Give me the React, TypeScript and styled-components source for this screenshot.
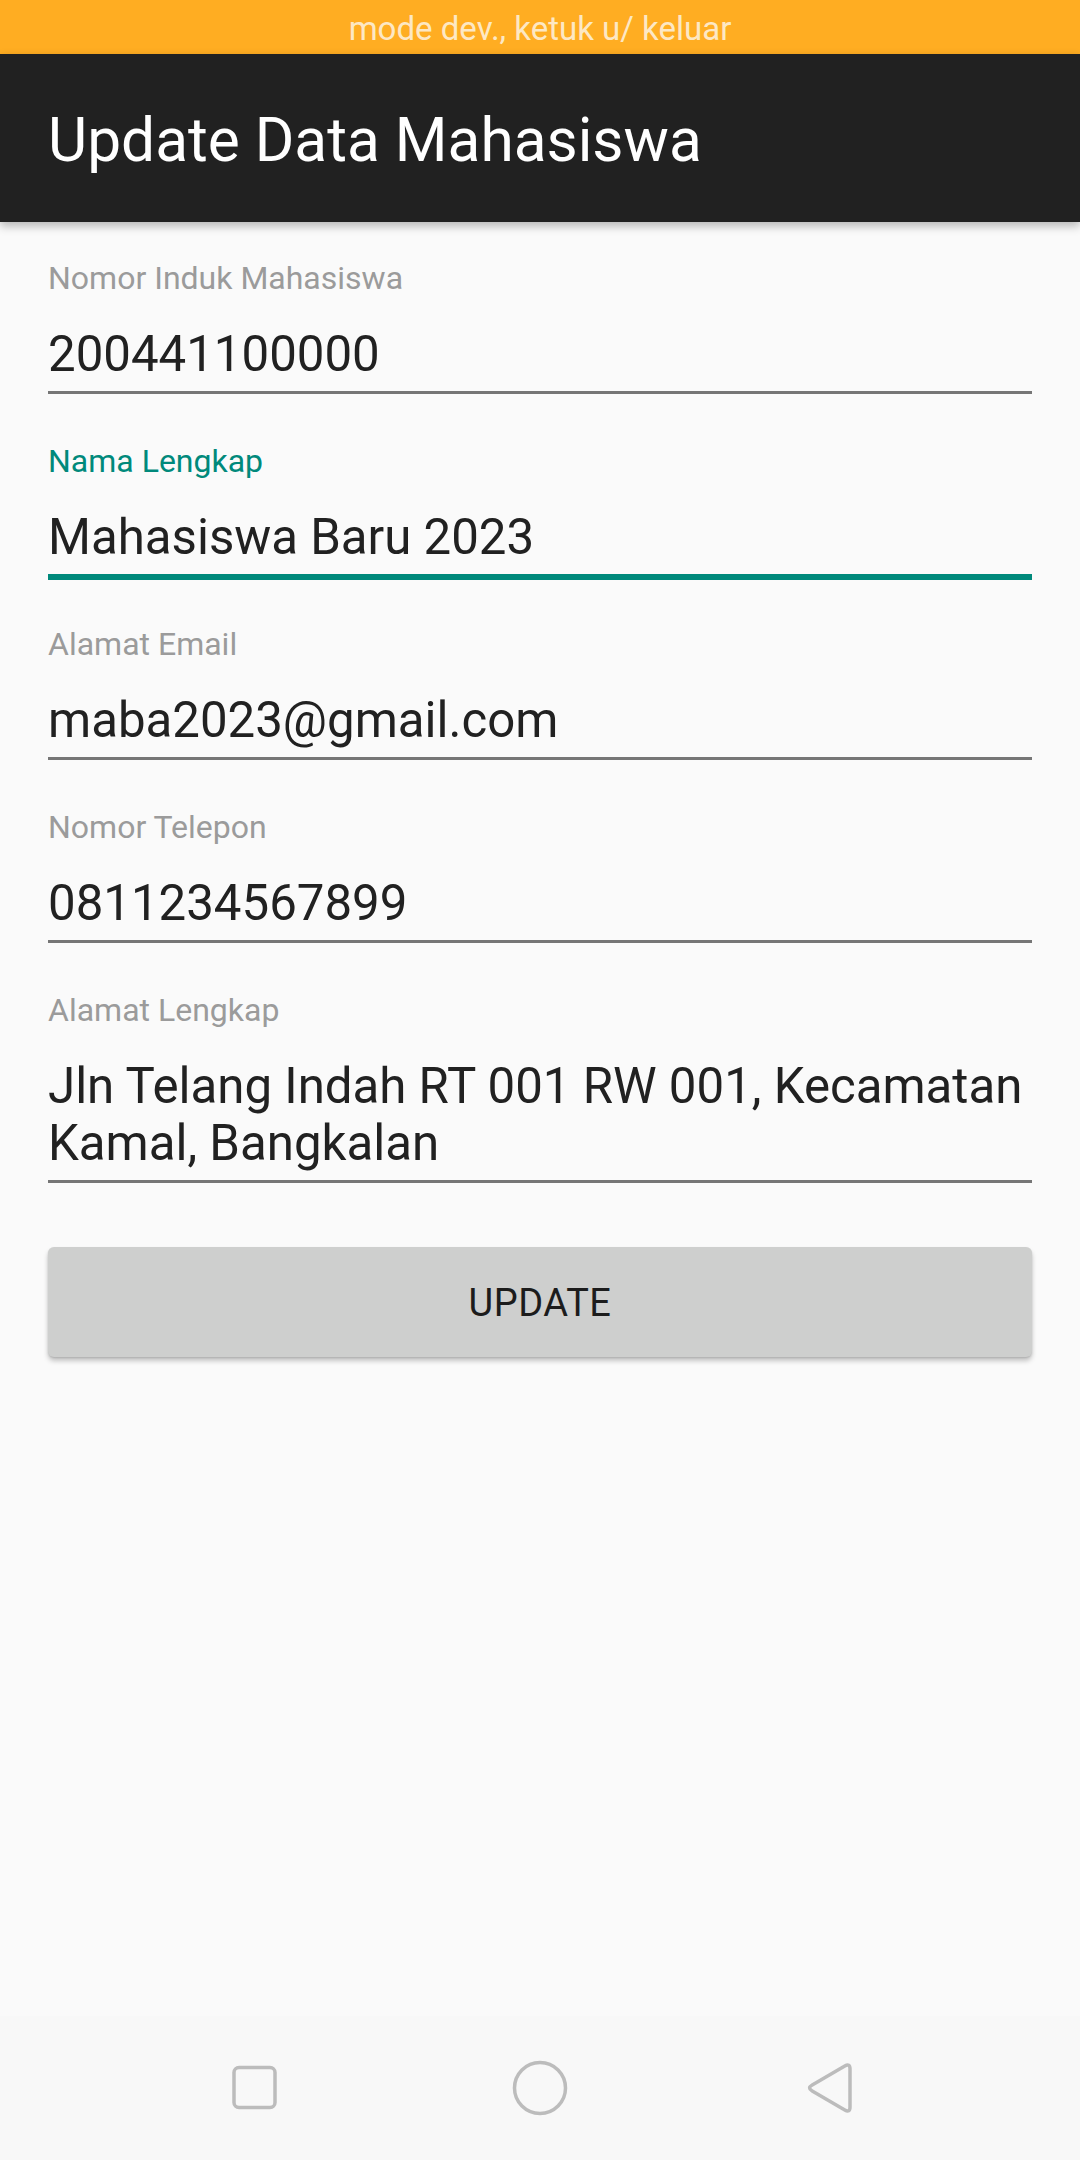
import React from "react";
import styled, { createGlobalStyle } from "styled-components";

const GlobalStyle = createGlobalStyle`
  html, body {
    margin: 0;
    padding: 0;
    background: #fafafa;
    font-family: Roboto, "Noto Sans", "Liberation Sans", sans-serif;
  }
  * { box-sizing: border-box; }
`;

const Screen = styled.div`
  min-height: 100vh;
  display: flex;
  flex-direction: column;
  background: #fafafa;
`;

const StatusBar = styled.div`
  height: 54px;
  background: #ffad22;
  color: #fde8c4;
  font-size: 33px;
  line-height: 58px;
  text-align: center;
  white-space: nowrap;
`;

const Toolbar = styled.header`
  height: 168px;
  background: #212121;
  display: flex;
  align-items: center;
  padding: 6px 48px 0;
  box-shadow: 0 4px 9px rgba(0, 0, 0, 0.28);
  position: relative;
  z-index: 1;
`;

const Title = styled.h1`
  margin: 0;
  font-size: 60.4px;
  font-weight: 400;
  color: #ffffff;
  line-height: 70px;
`;

const Form = styled.main`
  flex: 1;
  display: flex;
  flex-direction: column;
  gap: 49px;
  padding: 38px 48px 0;
`;

const Field = styled.div`
  display: flex;
  flex-direction: column;
`;

const Label = styled.label<{ $focused?: boolean }>`
  font-size: 32px;
  line-height: 36px;
  color: ${(p) => (p.$focused ? "#00897b" : "#9b9b9b")};
`;

const Value = styled.div`
  margin-top: 30px;
  padding-bottom: 8px;
  font-size: 49.2px;
  line-height: 57px;
  color: #212121;
  white-space: pre-wrap;
`;

const Underline = styled.div<{ $focused?: boolean }>`
  height: ${(p) => (p.$focused ? "6px" : "3px")};
  margin-bottom: ${(p) => (p.$focused ? "-3px" : "0")};
  background: ${(p) => (p.$focused ? "#00897b" : "#767676")};
`;

const Button = styled.button`
  margin-top: 15px;
  height: 110px;
  border: none;
  border-radius: 6px;
  background: #cecfce;
  color: #1c1c1c;
  font-family: Roboto, "Noto Sans", "Liberation Sans", sans-serif;
  font-size: 38px;
  font-weight: 400;
  letter-spacing: 0.5px;
  box-shadow: 0 4px 5px rgba(0, 0, 0, 0.22), 0 1px 2px rgba(0, 0, 0, 0.12);
  padding: 2px 0 0;
`;

const NavBar = styled.nav`
  height: 144px;
  background: #f8f8f8;
  display: flex;
  justify-content: center;
  align-items: center;
`;

const NavSlot = styled.div<{ $shift?: number }>`
  width: 290px;
  display: flex;
  justify-content: center;
  align-items: center;
  padding-left: ${(p) => (p.$shift ? `${p.$shift}px` : "0")};
`;

const fields = [
  { label: "Nomor Induk Mahasiswa", value: "200441100000" },
  { label: "Nama Lengkap", value: "Mahasiswa Baru 2023", focused: true },
  { label: "Alamat Email", value: "maba2023@gmail.com" },
  { label: "Nomor Telepon", value: "0811234567899" },
  {
    label: "Alamat Lengkap",
    value: "Jln Telang Indah RT 001 RW 001, Kecamatan\nKamal, Bangkalan",
  },
];

const navStroke = "#bcbcbc";

export default function App() {
  return (
    <Screen>
      <GlobalStyle />
      <StatusBar>mode dev., ketuk u/ keluar</StatusBar>
      <Toolbar>
        <Title>Update Data Mahasiswa</Title>
      </Toolbar>
      <Form>
        {fields.map((f) => (
          <Field key={f.label}>
            <Label $focused={f.focused}>{f.label}</Label>
            <Value>{f.value}</Value>
            <Underline $focused={f.focused} />
          </Field>
        ))}
        <Button type="button">UPDATE</Button>
      </Form>
      <NavBar>
        <NavSlot $shift={10}>
          <svg width="48" height="48" viewBox="0 0 48 48">
            <rect x="3" y="3.5" width="41" height="40" rx="5" fill="none" stroke={navStroke} strokeWidth="3.5" />
          </svg>
        </NavSlot>
        <NavSlot>
          <svg width="56" height="56" viewBox="0 0 56 56">
            <circle cx="28" cy="28" r="25.5" fill="none" stroke={navStroke} strokeWidth="3.5" />
          </svg>
        </NavSlot>
        <NavSlot>
          <svg width="52" height="56" viewBox="0 0 52 56">
            <path
              d="M40.8 6 Q46 3 46 9 L46 47 Q46 53 40.8 50 L8.2 31 Q3 28 8.2 25 Z"
              fill="none"
              stroke={navStroke}
              strokeWidth="3.5"
              strokeLinejoin="round"
            />
          </svg>
        </NavSlot>
      </NavBar>
    </Screen>
  );
}
